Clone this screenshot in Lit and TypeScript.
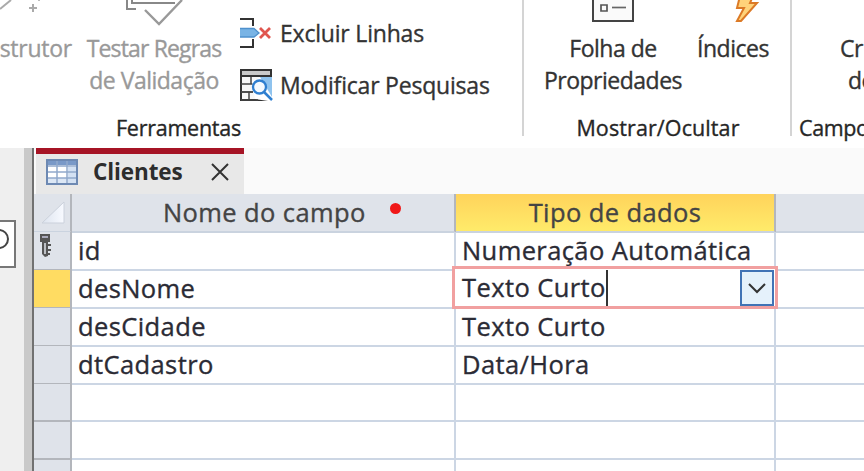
import { LitElement, css, html, svg } from "lit";
import { customElement } from "lit/decorators.js";
import { classMap } from "lit/directives/class-map.js";

interface Field {
  name: string;
  type: string;
  key?: boolean;
  active?: boolean;
}

const FIELDS: Field[] = [
  { name: "id", type: "Numeração Automática", key: true },
  { name: "desNome", type: "Texto Curto", active: true },
  { name: "desCidade", type: "Texto Curto" },
  { name: "dtCadastro", type: "Data/Hora" },
  { name: "", type: "" },
  { name: "", type: "" },
  { name: "", type: "" },
];

@customElement("access-ribbon")
export class AccessRibbon extends LitElement {
  static override styles = css`
    :host {
      display: flex;
      height: 148px;
      overflow: hidden;
      background: #fff;
      color: #333;
      font-size: 23px;
      -webkit-text-stroke: 0.35px;
      line-height: 32px;
      letter-spacing: -0.5px;
      white-space: nowrap;
    }
    svg {
      display: block;
      flex: none;
    }
    .group {
      box-sizing: border-box;
      height: 136px;
      border-right: 2px solid #d4d4d4;
      display: flex;
      flex-direction: column;
      flex: none;
    }
    .tools {
      width: 524px;
    }
    .show {
      width: 268px;
    }
    .macros {
      flex: 1;
      border: 0;
      min-width: 0;
    }
    .buttons {
      display: flex;
      flex: none;
      height: 112px;
    }
    .button {
      display: flex;
      flex-direction: column;
      align-items: center;
      text-align: center;
      flex: none;
    }
    .disabled {
      color: #999;
    }
    .builder {
      width: 72px;
      align-items: flex-end;
      letter-spacing: -0.25px;
    }
    .rules {
      width: 164px;
    }
    .tight {
      letter-spacing: -0.85px;
    }
    .sheet {
      width: 178px;
    }
    .indexes {
      width: 62px;
    }
    .create {
      align-items: flex-start;
      padding-left: 48px;
    }
    .create .second {
      padding-left: 8px;
    }
    .list {
      display: flex;
      flex-direction: column;
      padding: 7px 0 0 4px;
      letter-spacing: -0.2px;
    }
    .item {
      display: flex;
      align-items: center;
      height: 52px;
      gap: 6px;
    }
    .caption {
      flex: none;
      height: 32px;
      font-size: 21.5px;
      text-align: center;
      color: #262626;
      letter-spacing: -0.25px;
    }
    .tools .caption {
      padding-right: 165px;
    }
    .show .caption {
      padding-left: 2px;
      letter-spacing: 0.1px;
    }
    .macros .caption {
      text-align: left;
      padding-left: 7px;
      letter-spacing: -0.4px;
    }
  `;

  static wand = html`<svg width="72" height="32" viewBox="0 0 72 32">
    <path d="M0 9L11 0" stroke="#aaa" stroke-width="2" />
    <path d="M33 4v8M29 8h8" stroke="#aaa" stroke-width="2" />
    <path d="M39 0v1" stroke="#bbb" stroke-width="2" />
  </svg>`;

  static check = html`<svg width="60" height="32" viewBox="0 0 60 32" fill="none">
    <path d="M3 0V9H12M8 0V3H51" stroke="#888" stroke-width="2" />
    <path d="M21 10L35 24L58 0" stroke="#999" stroke-width="2.4" />
  </svg>`;

  static deleteRows = html`<svg width="34" height="34" viewBox="0 0 34 34" fill="none">
    <path d="M0 3H13V10M0 31H13V23" stroke="#333" stroke-width="2" />
    <path d="M0 12H14L19 17L14 21H0Z" fill="#79b4e5" />
    <path d="M0 12.5H14L19 17L14 21H0" stroke="#4f91cd" stroke-width="1.3" />
    <path d="M20 12L30 22M30 12L20 22" stroke="#e0564f" stroke-width="2.8" />
  </svg>`;

  static lookup = html`<svg width="34" height="34" viewBox="0 0 34 34" fill="none">
    <path d="M1 2H31V32H1Z" fill="#f7f7f7" stroke="#333" stroke-width="2" />
    <path d="M2 3H30V8H2Z" fill="#c9c9c9" />
    <path d="M1 8H31" stroke="#333" stroke-width="2" />
    <path d="M1 16H13M1 24H13M11 9V16M9 24V31M18 27V31" stroke="#444" stroke-width="1.5" />
    <path d="M21 9H32V33H28L15 31L12 13Z" fill="#fff" />
    <path d="M20 9H32V29Z" fill="#8fc3ee" />
    <path d="M1 24H13M18 32H1" stroke="#444" stroke-width="1.6" />
    <circle cx="19.500" cy="19" r="6.500" fill="#f4faff" stroke="#2f7fd0" stroke-width="2.300" />
    <path d="M24 24L32 32" stroke="#2f7fd0" stroke-width="2.500" />
  </svg>`;

  static propertySheet = html`<svg width="44" height="32" viewBox="0 0 44 32" fill="none">
    <path d="M2 0V21H42V0" fill="#fafafa" stroke="#444" stroke-width="2" />
    <path d="M10 5H16V11H10Z" stroke="#555" stroke-width="1.700" />
    <path d="M21 7.500H35" stroke="#666" stroke-width="1.700" />
  </svg>`;

  static bolt = html`<svg width="60" height="32" viewBox="0 0 60 32">
    <path
      d="M37 -4L34 8H41L34 21H38L54 3H47L50 -4Z"
      fill="#ffd37a"
      stroke="#dc7a26"
      stroke-width="2"
    />
  </svg>`;

  override render() {
    return html`
      <div class="group tools">
        <div class="buttons">
          <div class="button builder disabled">
            ${AccessRibbon.wand}<span>Construtor</span>
          </div>
          <div class="button rules disabled">
            ${AccessRibbon.check}
            <span class="tight">Testar Regras</span>
            <span>de Validação</span>
          </div>
          <div class="list">
            <div class="item">${AccessRibbon.deleteRows}<span>Excluir Linhas</span></div>
            <div class="item">${AccessRibbon.lookup}<span>Modificar Pesquisas</span></div>
          </div>
        </div>
        <div class="caption">Ferramentas</div>
      </div>
      <div class="group show">
        <div class="buttons">
          <div class="button sheet">
            ${AccessRibbon.propertySheet}<span>Folha de<br />Propriedades</span>
          </div>
          <div class="button indexes">${AccessRibbon.bolt}<span>Índices</span></div>
        </div>
        <div class="caption">Mostrar/Ocultar</div>
      </div>
      <div class="group macros">
        <div class="buttons">
          <div class="button create">
            <svg width="1" height="32"></svg>
            <span>Cr</span>
            <span class="second">de</span>
          </div>
        </div>
        <div class="caption">Campo</div>
      </div>
    `;
  }
}

@customElement("design-grid")
export class DesignGrid extends LitElement {
  static override styles = css`
    :host {
      display: block;
      color: #2b2b35;
      font-size: 25.5px;
      -webkit-text-stroke: 0.35px;
      letter-spacing: 0.4px;
    }
    .row {
      display: grid;
      grid-template-columns: 38px 384px 320px 1fr;
      height: 38px;
    }
    .row > div {
      box-sizing: border-box;
      border-right: 2px solid #ccd6e4;
      border-bottom: 2px solid #ccd6e4;
      line-height: 37px;
      padding-left: 6px;
      white-space: nowrap;
      min-width: 0;
    }
    .row > div:last-child {
      border-right: 0;
    }
    .row > .selector {
      background: #dfe3ea;
      border-color: #b3b6bc;
      padding: 0;
    }
    .head > div,
    .head > .selector {
      background: #dfe3ea;
      border-right-color: #b3b6bc;
      border-bottom-color: #cad3df;
      text-align: center;
      color: #444;
      padding: 0;
    }
    .head > .name {
      display: flex;
      gap: 24px;
      padding-left: 91px;
    }
    .head > .current {
      background: linear-gradient(#ffd35b, #ffeb6a);
    }
    .active > .selector {
      background: #ffdc62;
    }
    .row > .type {
      position: relative;
      padding-left: 6px;
    }
    .editor {
      position: absolute;
      box-sizing: border-box;
      left: -4px;
      top: -4px;
      width: 326px;
      height: 43px;
      border: 3px solid #f1a0a0;
      display: flex;
      align-items: center;
      padding: 0 1px 0 7px;
      background: #fff;
      z-index: 1;
    }
    .caret {
      width: 2px;
      height: 36px;
      background: #333;
      margin-right: auto;
    }
    .drop {
      box-sizing: border-box;
      width: 34px;
      height: 36px;
      border: 2px solid #4173b5;
      background: #e5f1fb;
      display: grid;
      place-items: center;
    }
    .dot {
      width: 11px;
      height: 11px;
      border-radius: 50%;
      background: #f01818;
      margin-top: 9px;
    }
    svg {
      display: block;
    }
  `;

  static corner = html`<svg width="36" height="36" viewBox="0 0 36 36">
    <defs>
      <linearGradient id="fade" x1="0" x2="1" y1="0" y2="0">
        <stop offset="0" stop-color="#dde4ef" />
        <stop offset="1" stop-color="#f8faff" />
      </linearGradient>
    </defs>
    <path d="M8 29L30 8V29Z" fill="url(#fade)" stroke="#cbd1db" />
  </svg>`;

  static key = html`<svg width="36" height="36" viewBox="0 0 36 36">
    <path d="M6 2H16V10H14V24L11 25L8 22V10H6Z" fill="#555" />
    <path d="M8 4H14V6H8Z" fill="#aab" />
    <path d="M11 11V22" stroke="#dfe3ea" stroke-width="1.500" />
    <path d="M13 13H17M13 18H17M13 22H16" stroke="#555" stroke-width="2" />
  </svg>`;

  renderType(field: Field) {
    if (!field.active) return field.type;
    return html`<div class="editor">
      <span>${field.type}</span><span class="caret"></span>
      <span class="drop">
        <svg width="20" height="12" viewBox="0 0 20 12" fill="none">
          <path d="M2 2L10 10L18 2" stroke="#333" stroke-width="2" />
        </svg>
      </span>
    </div>`;
  }

  override render() {
    return html`
      <div class="row head">
        <div class="selector">${DesignGrid.corner}</div>
        <div class="name">Nome do campo<span class="dot"></span></div>
        <div class="current">Tipo de dados</div>
        <div></div>
      </div>
      ${FIELDS.map(
        (field) => html`<div class=${classMap({ row: true, active: !!field.active })}>
          <div class="selector">${field.key ? DesignGrid.key : ""}</div>
          <div>${field.name}</div>
          <div class="type">${this.renderType(field)}</div>
          <div></div>
        </div>`
      )}
    `;
  }
}

@customElement("app-root")
export class AppRoot extends LitElement {
  static override styles = css`
    :host {
      display: flex;
      flex-direction: column;
      width: 864px;
      height: 471px;
      overflow: hidden;
      background: #fff;
      font-family: "Open Sans", "Noto Sans", sans-serif;
    }
    access-ribbon {
      flex: none;
    }
    .workspace {
      display: flex;
      flex: 1;
      min-height: 0;
    }
    .nav {
      box-sizing: border-box;
      width: 34px;
      flex: none;
      background: linear-gradient(90deg, #efefef 24px, #c9c9c9 24px);
      border-right: 2px solid #717171;
      padding-top: 72px;
    }
    .search {
      box-sizing: border-box;
      width: 16px;
      height: 48px;
      border: 2px solid #777;
      border-left: 0;
      background: #fff;
    }
    .document {
      flex: 1;
      min-width: 0;
      overflow: hidden;
    }
    .tabs {
      display: flex;
      height: 46px;
      background: #fafafa;
      padding-left: 2px;
    }
    .tab {
      box-sizing: border-box;
      display: flex;
      align-items: center;
      width: 208px;
      border-top: 6px solid #a61425;
      background: #e8e8e8;
      padding: 0 14px 5px 10px;
      font-size: 22.5px;
      font-weight: 700;
      color: #2d2d2d;
    }
    .title {
      margin-left: 15px;
      flex: 1;
      letter-spacing: -0.1px;
    }
    svg {
      display: block;
    }
  `;

  static table = svg`
    <rect x="1" y="1" width="30" height="24" fill="#fff" stroke="#6d89b3" stroke-width="2" />
    <rect x="2" y="2" width="28" height="4" fill="#7999c8" />
    <path d="M2 19H30V24H2Z" fill="#dce7f5" />
    <path d="M22 8H30V24H22Z" fill="#d3e1f3" />
    <path d="M2 7H30M2 13H30M2 19H30M11 2V24M21 2V24" stroke="#91a9cb" stroke-width="1.500" />`;

  override render() {
    return html`
      <access-ribbon></access-ribbon>
      <div class="workspace">
        <div class="nav">
          <div class="search">
            <svg width="14" height="44" viewBox="0 0 14 44" fill="none">
              <circle cx="-1" cy="17" r="9" stroke="#444" stroke-width="2" />
            </svg>
          </div>
        </div>
        <div class="document">
          <div class="tabs">
            <div class="tab">
              <svg width="32" height="26" viewBox="0 0 32 26">${AppRoot.table}</svg>
              <span class="title">Clientes</span>
              <svg width="20" height="20" viewBox="0 0 20 20">
                <path d="M2 2L18 18M18 2L2 18" stroke="#333" stroke-width="2" />
              </svg>
            </div>
          </div>
          <design-grid></design-grid>
        </div>
      </div>
    `;
  }
}
